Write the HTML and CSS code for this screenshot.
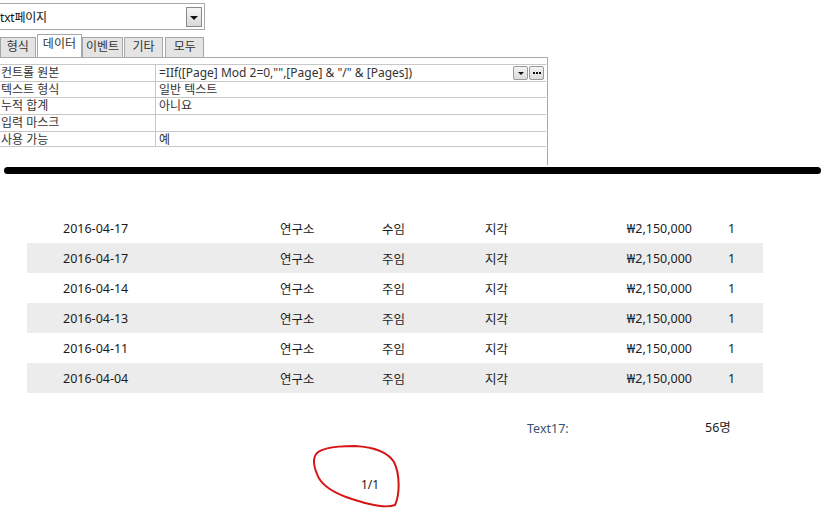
FILE: index.html
```html
<!DOCTYPE html>
<html lang="ko">
<head>
    <meta charset="UTF-8">
    <title>보고서 페이지 번호</title>
    <link rel="stylesheet" href="styles.css">
</head>
<body>
    <div class="props">
        <div class="combo">
            <span class="combo-text">txt페이지</span>
            <span class="combo-btn"><i class="arrow"></i></span>
        </div>

        <ul class="tabs">
            <li>형식</li>
            <li class="active">데이터</li>
            <li>이벤트</li>
            <li>기타</li>
            <li>모두</li>
        </ul>

        <div class="sheet">
            <div class="prop">
                <div class="label">컨트롤 원본</div>
                <div class="value">
                    <span>=IIf([Page] Mod 2=0,"",[Page] &amp; "/" &amp; [Pages])</span>
                    <span class="mini-btns">
                        <span class="mini"><i class="arrow small"></i></span>
                        <span class="mini dots"><i></i><i></i><i></i></span>
                    </span>
                </div>
            </div>
            <div class="prop">
                <div class="label">텍스트 형식</div>
                <div class="value">일반 텍스트</div>
            </div>
            <div class="prop">
                <div class="label">누적 합계</div>
                <div class="value">아니요</div>
            </div>
            <div class="prop">
                <div class="label">입력 마스크</div>
                <div class="value"></div>
            </div>
            <div class="prop">
                <div class="label">사용 가능</div>
                <div class="value">예</div>
            </div>
        </div>
    </div>

    <div class="rule"></div>

    <div class="report">
        <div class="rows">
            <div class="rec"><span>2016-04-17</span><span>연구소</span><span>수임</span><span>지각</span><span class="amt">₩2,150,000</span><span class="cnt">1</span></div>
            <div class="rec"><span>2016-04-17</span><span>연구소</span><span>주임</span><span>지각</span><span class="amt">₩2,150,000</span><span class="cnt">1</span></div>
            <div class="rec"><span>2016-04-14</span><span>연구소</span><span>주임</span><span>지각</span><span class="amt">₩2,150,000</span><span class="cnt">1</span></div>
            <div class="rec"><span>2016-04-13</span><span>연구소</span><span>주임</span><span>지각</span><span class="amt">₩2,150,000</span><span class="cnt">1</span></div>
            <div class="rec"><span>2016-04-11</span><span>연구소</span><span>주임</span><span>지각</span><span class="amt">₩2,150,000</span><span class="cnt">1</span></div>
            <div class="rec"><span>2016-04-04</span><span>연구소</span><span>주임</span><span>지각</span><span class="amt">₩2,150,000</span><span class="cnt">1</span></div>
        </div>

        <div class="summary">
            <span class="caption">Text17:</span>
            <span class="total">56명</span>
        </div>

        <div class="pager">
            <span class="page-no">1/1</span>
            <svg class="scribble" width="100" height="75" viewBox="0 0 100 75">
                <path d="M8,16 C11,7 32,6 48,6 C66,7 80,11 87,22 C93,34 93,54 88,65 C78,69 56,63 39,57 C23,51 13,43 10,34 C7,27 6,21 8,16 Z"
                      fill="none" stroke="#d81414" stroke-width="2" stroke-linejoin="round"/>
            </svg>
        </div>
    </div>
</body>
</html>
```

FILE: styles.css
```css
* {
    margin: 0;
    padding: 0;
    box-sizing: border-box;
}

body {
    background: #fff;
    font-family: 'Noto Sans', 'Noto Sans CJK KR', sans-serif;
    font-size: 12px;
    color: #222;
    width: 833px;
    height: 510px;
    overflow: hidden;
}

/* property sheet */
.props {
    width: 548px;
}

.combo {
    display: flex;
    align-items: center;
    justify-content: space-between;
    width: 205px;
    height: 27px;
    margin-top: 3px;
    border: 1px solid #a8a8a8;
    border-left: none;
    padding-right: 2px;
}

.combo-text {
    font-size: 12px;
    color: #111;
    letter-spacing: -0.2px;
}

.combo-btn {
    display: flex;
    align-items: center;
    justify-content: center;
    width: 16px;
    height: 20px;
    border: 1px solid #8a8a8a;
    background: linear-gradient(#f6f6f6, #d8d8d8);
}

.arrow {
    display: block;
    width: 0;
    height: 0;
    border-left: 4px solid transparent;
    border-right: 4px solid transparent;
    border-top: 4px solid #111;
    margin-top: 2px;
}

.arrow.small {
    border-left-width: 3px;
    border-right-width: 3px;
    border-top-width: 3px;
    margin-top: 5px;
}

.tabs {
    display: flex;
    align-items: flex-end;
    list-style: none;
    height: 27px;
    width: 204px;
}

.tabs li {
    height: 20px;
    line-height: 18px;
    margin-right: 1px;
    background: #e4e4e4;
    border: 1px solid #a6a6a6;
    border-bottom: none;
    color: #333;
    font-size: 12px;
    text-align: center;
    white-space: nowrap;
}

.tabs li:nth-child(1) { width: 36px; }
.tabs li:nth-child(3) { width: 41px; }
.tabs li:nth-child(4) { width: 40px; margin-right: 2px; }
.tabs li:nth-child(5) { width: 39px; margin-right: 0; }

.tabs li.active {
    width: 46px;
    height: 23px;
    line-height: 18px;
    background: #fff;
    margin-right: 0;
}

.sheet {
    height: 108px;
    border-top: 1px solid #a8a8a8;
    border-right: 1px solid #a8a8a8;
    padding-top: 6px;
    padding-right: 1px;
}

.prop {
    display: flex;
    height: 16.7px;
    border-top: 1px solid #c8c8c8;
    font-size: 12px;
    line-height: 15px;
    color: #333;
}

.prop:last-child {
    border-bottom: 1px solid #c8c8c8;
}

.label {
    width: 156px;
    padding-left: 1px;
    border-right: 1px solid #c8c8c8;
    white-space: nowrap;
}

.value {
    flex: 1;
    display: flex;
    justify-content: space-between;
    padding-left: 3px;
    white-space: nowrap;
}

.mini-btns {
    display: flex;
    gap: 1px;
    padding-top: 1px;
    padding-right: 2px;
}

.mini {
    display: flex;
    justify-content: center;
    width: 15px;
    height: 14px;
    border: 1px solid #9a9a9a;
    border-radius: 2px;
    background: linear-gradient(#f2f2f2, #dcdcdc);
}

.mini.dots {
    align-items: center;
    gap: 1px;
}

.mini.dots i {
    display: block;
    width: 2px;
    height: 2px;
    background: #111;
}

/* thick black marker line */
.rule {
    height: 7px;
    margin: 2px 12px 0 4px;
    background: #000;
    border-radius: 4px;
}

/* report body */
.report {
    padding-left: 27px;
    padding-top: 39px;
}

.rows {
    width: 736px;
}

.rec {
    display: grid;
    grid-template-columns: 217px 102px 103px 120px 87px 1fr;
    align-items: center;
    height: 30px;
    padding-left: 36px;
    font-size: 12.5px;
    color: #1c1c1c;
}

.rec:nth-child(even) {
    background: #ececec;
}

.rec .amt {
    text-align: right;
}

.rec .cnt {
    padding-left: 36px;
}

.summary {
    display: flex;
    align-items: flex-start;
    margin-top: 24px;
    padding-left: 500px;
    font-size: 12.5px;
}

.caption {
    width: 178px;
    margin-top: 3px;
    color: #3b5273;
}

.total {
    color: #1c1c1c;
}

.pager {
    position: relative;
    width: 400px;
    height: 70px;
}

.page-no {
    position: absolute;
    left: 334px;
    top: 39px;
    font-size: 12px;
    color: #1c1c1c;
}

.scribble {
    position: absolute;
    left: 280px;
    top: 3px;
}
```
